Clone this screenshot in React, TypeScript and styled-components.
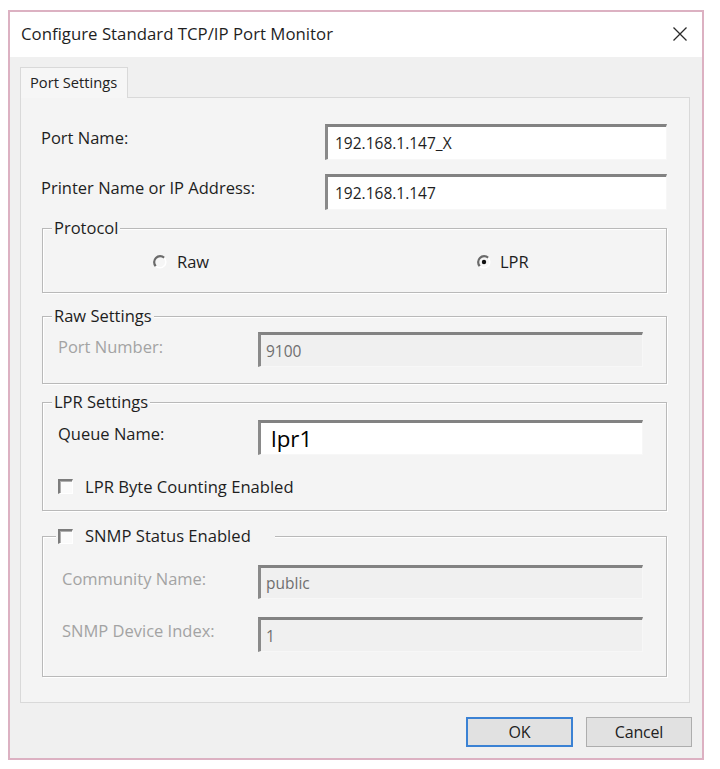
import React from "react";
import styled, { createGlobalStyle } from "styled-components";

const GlobalStyle = createGlobalStyle`
  html, body { margin: 0; padding: 0; background: #ffffff; }
  body { font-family: "Open Sans", "Noto Sans", "DejaVu Sans", sans-serif; color: #1e1e1e; }
  * { box-sizing: border-box; }
`;

const Page = styled.div`
  padding: 10px 0 0 8px;
`;

const Window = styled.div`
  width: 696px;
  height: 750px;
  border: 2px solid #dcb1c2;
  background: #f0f0f0;
  display: flex;
  flex-direction: column;
`;

const TitleBar = styled.div`
  height: 45px;
  background: #ffffff;
  display: flex;
  align-items: center;
  justify-content: space-between;
  padding: 0 14px 2px 11px;
`;

const Title = styled.div`
  font-size: 16.8px;
  color: #1f1f1f;
`;

const CloseButton = styled.div`
  width: 16px;
  height: 16px;
  display: flex;
  align-items: center;
  justify-content: center;
`;

const Body = styled.div`
  padding: 10px 12px 0 10px;
  display: flex;
  flex-direction: column;
`;

const TabStrip = styled.div`
  display: flex;
  height: 31px;
`;

const Tab = styled.div`
  position: relative;
  z-index: 1;
  width: 108px;
  height: 31px;
  border: 1px solid #d9d9d9;
  border-bottom: none;
  background: #f6f6f6;
  font-size: 14.7px;
  line-height: 28px;
  padding-left: 9px;
  color: #222;
`;

const Panel = styled.div`
  height: 606px;
  margin-top: -1px;
  border: 1px solid #d9d9d9;
  background: #f4f4f4;
  padding: 26px 22px 0 20px;
  display: flex;
  flex-direction: column;
`;

const Row = styled.div<{ $mt?: number }>`
  display: flex;
  align-items: flex-start;
  margin-top: ${(p) => p.$mt ?? 0}px;
`;

const Label = styled.div<{ $w: number; $pt?: number; $indent?: number; $disabled?: boolean }>`
  width: ${(p) => p.$w}px;
  flex: none;
  padding-top: ${(p) => p.$pt ?? 4}px;
  padding-left: ${(p) => p.$indent ?? 0}px;
  font-size: 16.5px;
  line-height: 20px;
  color: ${(p) => (p.$disabled ? "#a3a3a3" : "#1e1e1e")};
  white-space: nowrap;
`;

const Edit = styled.div<{ $w: number; $h: number; $disabled?: boolean; $big?: boolean; $pl?: number }>`
  width: ${(p) => p.$w}px;
  height: ${(p) => p.$h}px;
  flex: none;
  display: flex;
  align-items: center;
  border-top: 3px solid #828282;
  border-left: 3px solid #8a8a8a;
  border-right: 1px solid #f7f7f7;
  border-bottom: 1px solid #f7f7f7;
  background: ${(p) => (p.$disabled ? "#f0f0f0" : "#ffffff")};
  padding-left: ${(p) => p.$pl ?? 7}px;
  font-size: ${(p) => (p.$big ? 22.3 : 15.5)}px;
  color: ${(p) => (p.$disabled ? "#6f6f6f" : p.$big ? "#000" : "#1e1e1e")};
`;

const Group = styled.fieldset<{ $mt: number; $pt: number; $pb: number }>`
  margin: ${(p) => p.$mt}px 0 0 1px;
  padding: ${(p) => p.$pt}px 23px ${(p) => p.$pb}px 15px;
  border: 1px solid #b9b9b9;
  box-shadow: inset 1px 1px 0 #ffffff, 1px 1px 0 #ffffff;
  min-width: 0;
`;

const Legend = styled.legend<{ $ml: number; $pr?: number }>`
  margin-left: ${(p) => p.$ml}px;
  padding: 0 ${(p) => p.$pr ?? 2}px 0 2px;
  font-size: 16.5px;
  line-height: 20px;
  background: #f4f4f4;
  color: #1e1e1e;
  display: flex;
  align-items: center;
`;

const RadioRow = styled.div`
  display: grid;
  grid-template-columns: 324px auto;
  padding-left: 94px;
  height: 20px;
  align-items: center;
`;

const Option = styled.div<{ $gap: number }>`
  display: flex;
  align-items: center;
  gap: ${(p) => p.$gap}px;
  font-size: 16.5px;
  line-height: 20px;
`;

const CheckRow = styled.div<{ $mt?: number }>`
  display: flex;
  align-items: center;
  gap: 12px;
  margin-top: ${(p) => p.$mt ?? 0}px;
  height: 20px;
  font-size: 16.6px;
  white-space: nowrap;
`;

const CheckBox = styled.span`
  width: 15px;
  height: 15px;
  flex: none;
  border-top: 2px solid #7c7c7c;
  border-left: 2px solid #7c7c7c;
  border-right: 1px solid #ffffff;
  border-bottom: 1px solid #ffffff;
  background: #fbfbfb;
  box-shadow: inset 1px 1px 0 #b0b0b0;
`;

const Footer = styled.div`
  display: flex;
  justify-content: flex-end;
  gap: 13px;
  padding: 14px 10px 0 0;
`;

const Button = styled.div<{ $w: number; $primary?: boolean }>`
  width: ${(p) => p.$w}px;
  height: 30px;
  display: flex;
  align-items: center;
  justify-content: center;
  background: #e1e1e1;
  border: ${(p) => (p.$primary ? "2px solid #3b82d4" : "1px solid #adadad")};
  font-size: 16px;
  color: #222;
  letter-spacing: -0.2px;
`;

const Radio: React.FC<{ checked?: boolean }> = ({ checked }) => (
  <svg width="16" height="16" viewBox="0 0 16 16">
    <circle cx="8" cy="8" r="6" fill="#f6f6f6" />
    <path d="M3.76 12.24 A6 6 0 0 1 12.24 3.76" fill="none" stroke="#6a6a6a" strokeWidth="2.2" />
    <path d="M12.24 3.76 A6 6 0 0 1 3.76 12.24" fill="none" stroke="#ffffff" strokeWidth="1.5" />
    {checked && <circle cx="8" cy="8" r="2.2" fill="#111" />}
  </svg>
);

const CloseIcon = () => (
  <svg width="16" height="16" viewBox="0 0 16 16">
    <path d="M1.5 1.5 L14.5 14.5 M14.5 1.5 L1.5 14.5" stroke="#2a2a2a" strokeWidth="1.3" />
  </svg>
);

export default function App() {
  return (
    <>
      <GlobalStyle />
      <Page>
        <Window>
          <TitleBar>
            <Title>Configure Standard TCP/IP Port Monitor</Title>
            <CloseButton>
              <CloseIcon />
            </CloseButton>
          </TitleBar>
          <Body>
            <TabStrip>
              <Tab>Port Settings</Tab>
            </TabStrip>
            <Panel>
              <Row>
                <Label $w={284}>Port Name:</Label>
                <Edit $w={342} $h={36}>192.168.1.147_X</Edit>
              </Row>
              <Row $mt={14}>
                <Label $w={284}>Printer Name or IP Address:</Label>
                <Edit $w={342} $h={36}>192.168.1.147</Edit>
              </Row>

              <Group $mt={8} $pt={14} $pb={20}>
                <Legend $ml={-6}>Protocol</Legend>
                <RadioRow>
                  <Option $gap={9}>
                    <Radio />
                    Raw
                  </Option>
                  <Option $gap={8}>
                    <Radio checked />
                    LPR
                  </Option>
                </RadioRow>
              </Group>

              <Group $mt={13} $pt={6} $pb={16}>
                <Legend $ml={-6}>Raw Settings</Legend>
                <Row>
                  <Label $w={200} $pt={5} $disabled>Port Number:</Label>
                  <Edit $w={385} $h={35} $disabled $pl={5}>9100</Edit>
                </Row>
              </Group>

              <Group $mt={8} $pt={8} $pb={14}>
                <Legend $ml={-6}>LPR Settings</Legend>
                <Row>
                  <Label $w={200}>Queue Name:</Label>
                  <Edit $w={385} $h={35} $big $pl={10}>lpr1</Edit>
                </Row>
                <CheckRow $mt={21}>
                  <CheckBox />
                  LPR Byte Counting Enabled
                </CheckRow>
              </Group>

              <Group $mt={15} $pt={19} $pb={24}>
                <Legend $ml={-2} $pr={24}>
                  <CheckRow>
                    <CheckBox />
                    SNMP Status Enabled
                  </CheckRow>
                </Legend>
                <Row>
                  <Label $w={200} $indent={4} $disabled>Community Name:</Label>
                  <Edit $w={385} $h={34} $disabled $pl={5}>public</Edit>
                </Row>
                <Row $mt={18}>
                  <Label $w={200} $indent={4} $disabled>SNMP Device Index:</Label>
                  <Edit $w={385} $h={35} $disabled $pl={5}>1</Edit>
                </Row>
              </Group>
            </Panel>
          </Body>
          <Footer>
            <Button $w={107} $primary>OK</Button>
            <Button $w={106}>Cancel</Button>
          </Footer>
        </Window>
      </Page>
    </>
  );
}
